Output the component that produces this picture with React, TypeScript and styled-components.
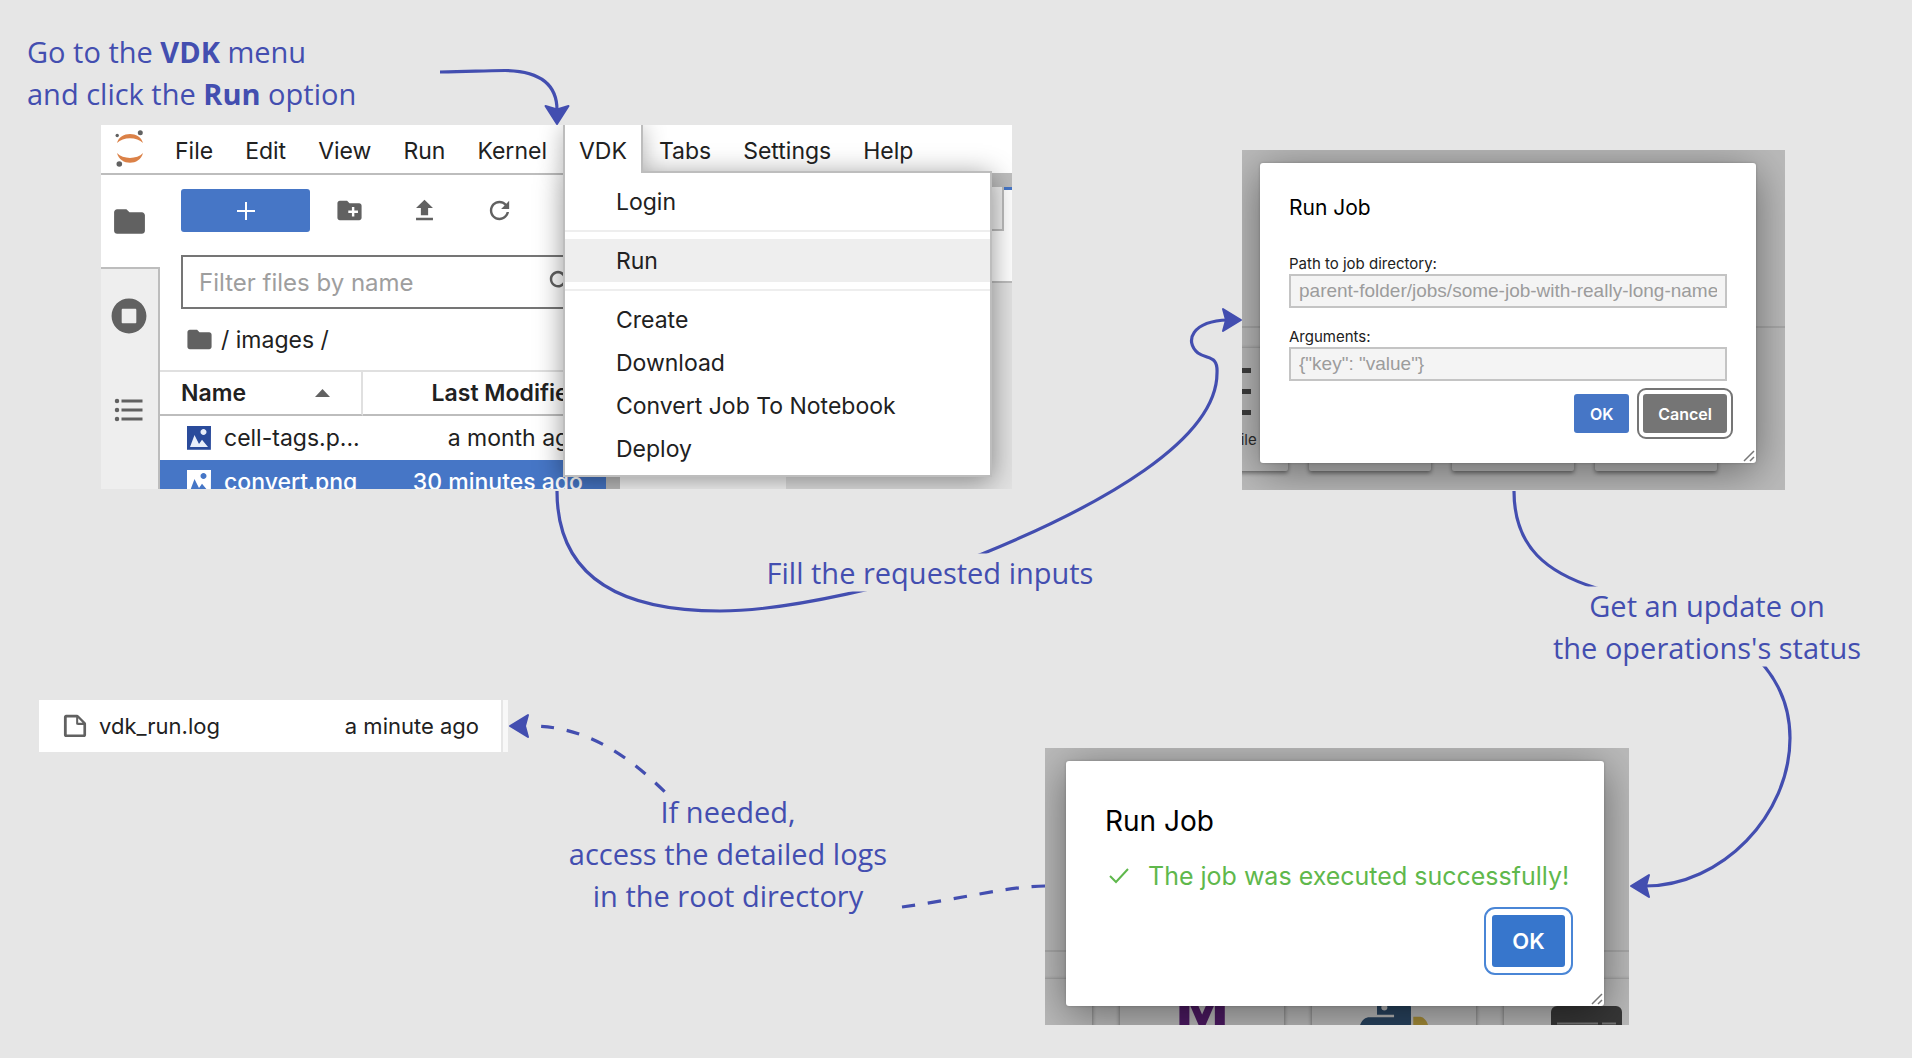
import React from 'react';
import styled, { createGlobalStyle, css } from 'styled-components';

const ink = '#434eb0';
const blue = '#4676c6';
const ui = "Inter, 'Liberation Sans', sans-serif";

const GlobalStyle = createGlobalStyle`
  *, *::before, *::after { box-sizing: border-box; }
  body { margin: 0; background: #e6e6e6; font-family: ${ui}; color: #212121; }
  button, input { font: inherit; }
  button { cursor: pointer; }
`;

const Board = styled.main`
  position: relative;
  width: 100%;
  min-height: 1058px;
  overflow: hidden;
`;

/* A node of the diagram, pinned on the board */
const Node = styled.section<{ $x: number; $y: number; $w: number }>`
  position: absolute;
  left: ${(p) => p.$x}px;
  top: ${(p) => p.$y}px;
  width: ${(p) => p.$w}px;
`;

const Note = styled.p<{ $x: number; $y: number; $w: number; $center?: boolean }>`
  position: absolute;
  left: ${(p) => p.$x}px;
  top: ${(p) => p.$y}px;
  width: ${(p) => p.$w}px;
  margin: 0;
  font: 400 29px/42px 'Open Sans', 'Noto Sans', sans-serif;
  color: ${ink};
  text-align: ${(p) => (p.$center ? 'center' : 'left')};
  b { font-weight: 700; }
`;

const Connectors = styled.svg`
  position: absolute;
  left: 0;
  top: 0;
  pointer-events: none;
`;

/* ---------- JupyterLab window ---------- */

const Lab = styled(Node)`
  display: flex;
  flex-direction: column;
  height: 364px;
  overflow: hidden;
  background: #fff;
`;

const MenuBar = styled.nav`
  position: relative;
  z-index: 2;
  display: flex;
  flex: none;
  height: 50px;
  border-bottom: 2px solid #bdbdbd;
`;

const LogoBox = styled.div`
  width: 58px;
  padding: 4px 0 0 13px;
`;

const menuText = css`
  font-size: 23px;
  line-height: 28px;
  color: #212121;
`;

const MenuButton = styled.button<{ $open?: boolean }>`
  ${menuText}
  position: relative;
  height: 48px;
  padding: 4px 16px 0;
  border: 0;
  background: none;
  ${(p) => p.$open && css`
    z-index: 2;
    padding: 4px 14px 0;
    border: solid #bdbdbd;
    border-width: 0 2px;
    background: #fff;
  `}
`;

const MenuSlot = styled.div`
  position: relative;
  z-index: 1;
  box-shadow: 0 2px 24px rgba(0, 0, 0, 0.3);
`;

const OpenMenu = styled.div`
  position: absolute;
  z-index: 1;
  top: 46px;
  left: 0;
  display: flex;
  flex-direction: column;
  width: 429px;
  padding: 7px 0 5px;
  border: 2px solid #bdbdbd;
  background: #fff;
  box-shadow: 0 4px 26px rgba(0, 0, 0, 0.42);
`;

const MenuItem = styled.button<{ $active?: boolean }>`
  ${menuText}
  height: 43px;
  padding: 0 51px;
  border: 0;
  text-align: left;
  background: ${(p) => (p.$active ? '#eee' : 'transparent')};
`;

const Rule = styled.hr`
  width: 100%;
  height: 2px;
  margin: 7px 0;
  border: 0;
  background: #eee;
`;

const Body = styled.div`
  display: flex;
  flex: 1;
  min-height: 0;
`;

const SideBar = styled.div`
  display: flex;
  flex: none;
  flex-direction: column;
  width: 59px;
`;

const SideTab = styled.button<{ $active?: boolean }>`
  display: flex;
  flex: none;
  align-items: center;
  justify-content: center;
  height: ${(p) => (p.$active ? 92 : 94)}px;
  padding: 0 2px 0 0;
  border: 0;
  background: none;
  color: #616161;
`;

const SideRest = styled.div`
  flex: 1;
  display: flex;
  flex-direction: column;
  border: solid #bdbdbd;
  border-width: 2px 2px 0 0;
  background: #eee;
`;

const Files = styled.div`
  display: flex;
  flex: none;
  flex-direction: column;
  width: 446px;
  background: #fff;
`;

const Toolbar = styled.div`
  display: flex;
  flex: none;
  align-items: center;
  padding: 14px 21px 0;
`;

const NewButton = styled.button`
  display: flex;
  align-items: center;
  justify-content: center;
  width: 129px;
  height: 43px;
  margin-right: 2px;
  border: 0;
  border-radius: 3px;
  background: ${blue};
  color: #fff;
`;

const ToolButton = styled.button`
  display: flex;
  align-items: center;
  justify-content: center;
  width: 75px;
  height: 43px;
  padding: 0;
  border: 0;
  background: none;
  color: #616161;
`;

const Filter = styled.label`
  display: flex;
  flex: none;
  align-items: center;
  height: 54px;
  margin: 23px 21px 0;
  padding: 0 8px 0 16px;
  border: 2px solid #757575;
  color: #616161;
`;

const FilterInput = styled.input`
  flex: 1;
  min-width: 0;
  padding: 0;
  border: 0;
  outline: 0;
  font-size: 24px;
  background: none;
  &::placeholder { color: #9e9e9e; opacity: 1; }
`;

const Crumbs = styled.div`
  ${menuText}
  display: flex;
  flex: none;
  align-items: center;
  gap: 7px;
  height: 61px;
  padding: 0 25px;
  svg { color: #616161; }
`;

const FileTable = styled.table`
  width: 100%;
  table-layout: fixed;
  border-collapse: separate;
  border-spacing: 0;
  ${menuText}
`;

const Th = styled.th<{ $end?: boolean }>`
  height: 46px;
  padding: ${(p) => (p.$end ? '0 23px 0 0' : '0 31px 0 21px')};
  border-top: 2px solid #e0e0e0;
  border-bottom: 2px solid #bdbdbd;
  border-right: ${(p) => (p.$end ? '0' : '2px solid #e0e0e0')};
  font-weight: 600;
  text-align: ${(p) => (p.$end ? 'right' : 'left')};
  white-space: nowrap;
`;

const NameHead = styled.span`
  display: flex;
  align-items: center;
  justify-content: space-between;
  svg { color: #616161; }
`;

const Row = styled.tr<{ $selected?: boolean }>`
  ${(p) => p.$selected && css`
    background: ${blue};
    color: #fff;
    font-weight: 500;
  `}
`;

const Td = styled.td<{ $end?: boolean }>`
  height: 44px;
  padding: ${(p) => (p.$end ? '0 23px 0 0' : '0 0 0 24px')};
  text-align: ${(p) => (p.$end ? 'right' : 'left')};
  white-space: nowrap;
`;

const FileName = styled.span`
  display: flex;
  align-items: center;
  gap: 10px;
`;

const Divider = styled.div`
  width: 14px;
  background: #bdbdbd;
`;

const Work = styled.div`
  display: flex;
  flex: 1;
  flex-direction: column;
  background: #e2e2e2;
`;

const WorkStrip = styled.div`
  height: 12px;
  background: #bdbdbd;
`;

const WorkTabs = styled.div`
  display: flex;
  height: 44px;
  background: #fff;
`;

const WorkTab = styled.div`
  width: 384px;
  border: solid #bdbdbd;
  border-width: 0 2px 2px 0;
  background: #eee;
`;

const WorkTabActive = styled.div`
  flex: 1;
  border-top: 3px solid ${blue};
`;

const WorkToolbar = styled.div`
  height: 52px;
  border-bottom: 2px solid #bdbdbd;
  background: #fff;
`;

const WorkCell = styled.div`
  flex: 1;
  width: 166px;
  background: #f8f8f8;
`;

/* ---------- Log file row ---------- */

const LogRow = styled(Node)`
  display: flex;
  height: 52px;
  background: #f8f8f8;
`;

const LogCell = styled.div`
  display: flex;
  flex: 1;
  align-items: center;
  gap: 10px;
  margin-right: 5px;
  padding: 0 22px;
  border-right: 2px solid #e6e6e6;
  background: #fff;
  font-size: 22px;
  line-height: 28px;
  svg { color: #616161; }
`;

const Age = styled.span`
  margin-left: auto;
`;

/* ---------- Dialogs over the launcher ---------- */

const Scene = styled(Node)<{ $h: number }>`
  display: grid;
  grid-template-columns: minmax(0, 1fr);
  height: ${(p) => p.$h}px;
  overflow: hidden;
  background: #bababa;
  > * { grid-area: 1 / 1; }
`;

const Launcher = styled.div<{ $top: number; $gap: number }>`
  display: flex;
  gap: ${(p) => p.$gap}px;
  min-width: 0;
  margin-top: ${(p) => p.$top}px;
  padding-top: ${(p) => p.$gap - 2}px;
  border-top: 2px solid #a8a8a8;
`;

const Card = styled.div<{ $w: number; $h: number; $shift?: number }>`
  display: flex;
  flex: none;
  flex-direction: column;
  align-items: center;
  width: ${(p) => p.$w}px;
  height: ${(p) => p.$h}px;
  margin-left: ${(p) => p.$shift ?? 0}px;
  padding-top: 20px;
  border-top: 1px solid #a4a4a4;
  border-radius: 2px;
  background: #b9b9b9;
  box-shadow: 0 2px 4px rgba(0, 0, 0, 0.45);
`;

const CardLabel = styled.span`
  margin-top: 14px;
  font-size: 15px;
  line-height: 20px;
  color: #2c2c2c;
`;

const Markdown = styled.span`
  font: 700 56px/30px 'DejaVu Sans', sans-serif;
  color: #4d1a63;
`;

const Dialog = styled.form<{ $big?: boolean }>`
  position: relative;
  display: flex;
  flex-direction: column;
  align-self: start;
  min-width: 0;
  margin: ${(p) => (p.$big ? '13px 25px 0 21px' : '13px 29px 0 18px')};
  padding: ${(p) => (p.$big ? '39px' : '30px 29px')};
  border-radius: 3px;
  background: #fff;
  box-shadow: 0 8px 44px rgba(0, 0, 0, 0.45), 0 0 3px rgba(0, 0, 0, 0.2);
`;

const Title = styled.h2<{ $big?: boolean }>`
  margin: 0 0 ${(p) => (p.$big ? 17 : 31)}px;
  font-weight: 400;
  font-size: ${(p) => (p.$big ? 28 : 21)}px;
  line-height: ${(p) => (p.$big ? 42 : 30)}px;
  color: #000;
`;

const Field = styled.label`
  display: flex;
  flex-direction: column;
  font-size: 15px;
  line-height: 20px;
  & + & { margin-top: 19px; }
`;

const TextInput = styled.input`
  width: 100%;
  height: 34px;
  padding: 0 8px;
  border: 2px solid #c4c4c4;
  background: #f4f4f4;
  font-family: 'Liberation Sans', Arial, sans-serif;
  font-size: 19px;
  &::placeholder { color: #9c9c9c; opacity: 1; }
`;

const Actions = styled.div<{ $big?: boolean }>`
  display: flex;
  justify-content: flex-end;
  gap: 14px;
  margin-top: ${(p) => (p.$big ? 22 : 13)}px;
`;

const DialogButton = styled.button<{ $tone?: 'grey' | 'blue'; $big?: boolean; $ring?: boolean }>`
  min-width: ${(p) => (p.$big ? 73 : 55)}px;
  height: ${(p) => (p.$big ? 52 : 39)}px;
  padding: 0 15px;
  border: 0;
  border-radius: 3px;
  background: ${(p) => (p.$tone === 'grey' ? '#757575' : p.$big ? '#3776cc' : blue)};
  color: #fff;
  font-size: ${(p) => (p.$big ? 22 : 16)}px;
  font-weight: 600;
  ${(p) => p.$ring && css`
    outline: 2px solid ${p.$tone === 'grey' ? '#757575' : '#4a86d6'};
    outline-offset: ${p.$big ? 6 : 4}px;
  `}
`;

const Success = styled.p`
  display: flex;
  align-items: center;
  gap: 19px;
  margin: 0;
  padding-left: 4px;
  font-size: 25px;
  line-height: 34px;
  white-space: nowrap;
  color: #5fb84c;
  svg { flex: none; }
`;

const Grip = styled.svg`
  position: absolute;
  right: 1px;
  bottom: 1px;
`;

/* ---------- Icons ---------- */

const Glyph = ({ d, size, box = 24 }: { d: string; size: number; box?: number }) => (
  <svg width={size} height={size} viewBox={`0 0 ${box} ${box}`} fill="currentColor" aria-hidden="true">
    <path d={d} fillRule="evenodd" />
  </svg>
);

const paths = {
  folder: 'M10 4H4c-1.1 0-1.99.9-1.99 2L2 18c0 1.1.9 2 2 2h16c1.1 0 2-.9 2-2V8c0-1.1-.9-2-2-2h-8l-2-2z',
  newFolder:
    'M20 6h-8l-2-2H4c-1.11 0-1.99.89-1.99 2L2 18c0 1.11.89 2 2 2h16c1.11 0 2-.89 2-2V8c0-1.11-.89-2-2-2zm-1 8h-3v3h-2v-3h-3v-2h3V9h2v3h3v2z',
  upload: 'M9 16h6v-6h4l-7-7-7 7h4zm-4 2h14v2H5z',
  refresh:
    'M9 13.5c-2.49 0-4.5-2.01-4.5-4.5S6.51 4.5 9 4.5c1.24 0 2.36.52 3.17 1.33L10 8h5V3l-1.76 1.76C12.15 3.68 10.66 3 9 3 5.69 3 3.01 5.69 3.01 9S5.69 15 9 15c2.97 0 5.43-2.16 5.9-5h-1.52c-.46 2-2.24 3.5-4.38 3.5z',
  running:
    'M256 8C119 8 8 119 8 256s111 248 248 248 248-111 248-248S393 8 256 8zm104 336c0 8.8-7.2 16-16 16H168c-8.8 0-16-7.2-16-16V168c0-8.8 7.2-16 16-16h176c8.8 0 16 7.2 16 16v176z',
  toc: 'M7,5H21V7H7V5M7,13V11H21V13H7M4,4.5A1.5,1.5 0 0,1 5.5,6A1.5,1.5 0 0,1 4,7.5A1.5,1.5 0 0,1 2.5,6A1.5,1.5 0 0,1 4,4.5M4,10.5A1.5,1.5 0 0,1 5.5,12A1.5,1.5 0 0,1 4,13.5A1.5,1.5 0 0,1 2.5,12A1.5,1.5 0 0,1 4,10.5M7,19V17H21V19H7M4,16.5A1.5,1.5 0 0,1 5.5,18A1.5,1.5 0 0,1 4,19.5A1.5,1.5 0 0,1 2.5,18A1.5,1.5 0 0,1 4,16.5Z',
  search:
    'M12.1 10.9h-.7l-.2-.2c.8-.9 1.3-2.2 1.3-3.5 0-3-2.4-5.4-5.4-5.4S1.8 4.2 1.8 7.1s2.4 5.4 5.4 5.4c1.3 0 2.5-.5 3.5-1.3l.2.2v.7l4.1 4.1 1.2-1.2-4.1-4.1zm-5 0c-2.1 0-3.7-1.7-3.7-3.7s1.7-3.7 3.7-3.7 3.7 1.7 3.7 3.7-1.6 3.7-3.7 3.7z',
  file: 'M19.3 8.2l-5.5-5.5c-.3-.3-.7-.5-1.2-.5H3.9c-.8.1-1.6.9-1.6 1.8v14.1c0 .9.7 1.6 1.6 1.6h14.2c.9 0 1.6-.7 1.6-1.6V9.4c.1-.5-.1-.9-.4-1.2zm-5.8-3.3l3.4 3.6h-3.4V4.9zm3.9 12.7H4.7c-.1 0-.2 0-.2-.2V4.7c0-.2.1-.3.2-.3h7.2v4.4s0 .8.3 1.1c.3.3 1.1.3 1.1.3h4.3v7.2s-.1.2-.2.2z',
  caret: 'M0 8L7.5 0L15 8Z',
};

const JupyterLogo = () => (
  <svg width="32" height="40" viewBox="0 0 32 40" aria-label="Jupyter">
    <path d="M3 14C6 2 26 2 29 14C23 7.5 9 7.5 3 14Z" fill="#db8147" />
    <path d="M3 24C6 37 26 37 29 24C23 30.5 9 30.5 3 24Z" fill="#db8147" />
    <circle cx="26.3" cy="3.7" r="2.5" fill="#616161" />
    <circle cx="3.2" cy="6.5" r="1.7" fill="#616161" />
    <circle cx="5.3" cy="35" r="2.8" fill="#616161" />
  </svg>
);

const ImageIcon = ({ back, front }: { back: string; front: string }) => (
  <svg width="30" height="30" viewBox="0 0 22 22" aria-hidden="true">
    <path d="M2.2 2.2h17.5v17.5H2.2z" fill={front} />
    <path
      fill={back}
      d="M2.2 2.2v17.5h17.5l.1-17.5H2.2zm12.1 2.2c1.2 0 2.2 1 2.2 2.2s-1 2.2-2.2 2.2-2.2-1-2.2-2.2 1-2.2 2.2-2.2zM4.4 17.6l3.3-8.8 3.3 6.6 2.2-3.2 4.4 5.4H4.4z"
    />
  </svg>
);

const PythonIcon = () => (
  <svg width="70" height="70" viewBox="0 0 24 24" aria-hidden="true">
    <path
      fill="#28435f"
      d="M14.25.18l.9.2.73.26.59.3.45.32.34.34.25.34.16.33.1.3.04.26.02.2-.01.13V8.5l-.05.63-.13.55-.21.46-.26.38-.3.31-.33.25-.35.19-.35.14-.33.1-.3.07-.26.04-.21.02H8.77l-.69.05-.59.14-.5.22-.41.27-.33.32-.27.35-.2.36-.15.37-.1.35-.07.32-.04.27-.02.21v3.06H3.17l-.21-.03-.28-.07-.32-.12-.35-.18-.36-.26-.36-.36-.35-.46-.32-.59-.28-.73-.21-.88-.14-1.05-.05-1.23.06-1.22.16-1.04.24-.87.32-.71.36-.57.4-.44.42-.33.42-.24.4-.16.36-.1.32-.05.24-.01h.16l.06.01h8.16v-.83H6.18l-.01-2.75-.02-.37.05-.34.11-.31.17-.28.25-.26.31-.23.38-.2.44-.18.51-.15.58-.12.64-.1.71-.06.77-.04.84-.02 1.27.05zm-6.3 1.98l-.23.33-.08.41.08.41.23.34.33.22.41.09.41-.09.33-.22.23-.34.08-.41-.08-.41-.23-.33-.33-.22-.41-.09-.41.09z"
    />
    <path
      fill="#a58c38"
      d="M21.04 6.11l.28.06.32.12.35.18.36.27.36.35.35.47.32.59.28.73.21.88.14 1.04.05 1.23-.06 1.23-.16 1.04-.24.86-.32.71-.36.57-.4.45-.42.33-.42.24-.4.16-.36.09-.32.05-.24.02-.16-.01h-8.22v.82h5.84l.01 2.76.02.36-.05.34-.11.31-.17.29-.25.25-.31.24-.38.2-.44.17-.51.15-.58.13-.64.09-.71.07-.77.04-.84.01-1.27-.04-1.07-.14-.9-.2-.73-.25-.59-.3-.45-.33-.34-.34-.25-.34-.16-.33-.1-.3-.04-.25-.02-.2.01-.13v-5.34l.05-.64.13-.54.21-.46.26-.38.3-.32.33-.24.35-.2.35-.14.33-.1.3-.06.26-.04.21-.02.13-.01h5.84l.69-.05.59-.14.5-.21.41-.28.33-.32.27-.35.2-.36.15-.36.1-.35.07-.32.04-.28.02-.21V6.07h2.09l.14.01z"
    />
  </svg>
);

const TerminalIcon = () => (
  <svg width="71" height="66" viewBox="0 0 71 66" aria-hidden="true">
    <rect y="7" width="71" height="59" rx="6" fill="#373737" />
    <path d="M6 24.5H47M51 24.5H65" stroke="#777" strokeWidth="2" />
  </svg>
);

const LinesIcon = () => (
  <svg width="48" height="48" viewBox="0 0 48 48" aria-hidden="true">
    <path d="M0 2.5H48M0 23.5H48M0 44.5H48" stroke="#3d3d3d" strokeWidth="5" />
  </svg>
);

const ResizeGrip = () => (
  <Grip width="12" height="12" viewBox="0 0 12 12" stroke="#777" aria-hidden="true">
    <path d="M1 11L11 1M7 11L11 7" strokeWidth="1.5" />
  </Grip>
);

/* ---------- Parts ---------- */

const LabWindow = () => (
  <Lab $x={101} $y={125} $w={911}>
    <MenuBar>
      <LogoBox><JupyterLogo /></LogoBox>
      {['File', 'Edit', 'View', 'Run', 'Kernel'].map((m) => <MenuButton key={m}>{m}</MenuButton>)}
      <MenuSlot>
        <MenuButton $open>VDK</MenuButton>
        <OpenMenu role="menu">
          <MenuItem>Login</MenuItem>
          <Rule />
          <MenuItem $active>Run</MenuItem>
          <Rule />
          <MenuItem>Create</MenuItem>
          <MenuItem>Download</MenuItem>
          <MenuItem>Convert Job To Notebook</MenuItem>
          <MenuItem>Deploy</MenuItem>
        </OpenMenu>
      </MenuSlot>
      {['Tabs', 'Settings', 'Help'].map((m) => <MenuButton key={m}>{m}</MenuButton>)}
    </MenuBar>
    <Body>
      <SideBar>
        <SideTab $active aria-label="File browser"><Glyph d={paths.folder} size={37} /></SideTab>
        <SideRest>
          <SideTab aria-label="Running"><Glyph d={paths.running} size={36} box={512} /></SideTab>
          <SideTab aria-label="Table of contents"><Glyph d={paths.toc} size={36} /></SideTab>
        </SideRest>
      </SideBar>
      <Files>
        <Toolbar>
          <NewButton aria-label="New launcher">
            <svg width="18" height="18" viewBox="0 0 18 18" stroke="#fff" strokeWidth="2"><path d="M9 0V18M0 9H18" /></svg>
          </NewButton>
          <ToolButton aria-label="New folder"><Glyph d={paths.newFolder} size={29} /></ToolButton>
          <ToolButton aria-label="Upload"><Glyph d={paths.upload} size={29} /></ToolButton>
          <ToolButton aria-label="Refresh"><Glyph d={paths.refresh} size={29} box={18} /></ToolButton>
        </Toolbar>
        <Filter>
          <FilterInput aria-label="Filter files by name" placeholder="Filter files by name" />
          <Glyph d={paths.search} size={28} box={18} />
        </Filter>
        <Crumbs><Glyph d={paths.folder} size={29} />/ images /</Crumbs>
        <FileTable>
          <colgroup><col width="203" /><col /></colgroup>
          <thead>
            <tr>
              <Th>
                <NameHead>
                  Name
                  <svg width="15" height="8" viewBox="0 0 15 8" fill="currentColor"><path d={paths.caret} /></svg>
                </NameHead>
              </Th>
              <Th $end>Last Modified</Th>
            </tr>
          </thead>
          <tbody>
            <Row>
              <Td><FileName><ImageIcon back="#2a4b9b" front="#e8eefa" />cell-tags.p...</FileName></Td>
              <Td $end>a month ago</Td>
            </Row>
            <Row $selected>
              <Td><FileName><ImageIcon back="#fff" front={blue} />convert.png</FileName></Td>
              <Td $end>30 minutes ago</Td>
            </Row>
          </tbody>
        </FileTable>
      </Files>
      <Divider />
      <Work>
        <WorkStrip />
        <WorkTabs><WorkTab /><WorkTabActive /></WorkTabs>
        <WorkToolbar />
        <WorkCell />
      </Work>
    </Body>
  </Lab>
);

const InputDialog = () => (
  <Scene $x={1242} $y={150} $w={543} $h={340}>
    <Launcher $top={176} $gap={21}>
      <Card $w={122} $h={124} $shift={-76}>
        <LinesIcon />
        <CardLabel>Text File</CardLabel>
      </Card>
      <Card $w={122} $h={124} />
      <Card $w={122} $h={124} />
      <Card $w={122} $h={124} />
    </Launcher>
    <Dialog onSubmit={(e) => e.preventDefault()}>
      <Title>Run Job</Title>
      <Field>
        Path to job directory:
        <TextInput placeholder="parent-folder/jobs/some-job-with-really-long-name" />
      </Field>
      <Field>
        Arguments:
        <TextInput placeholder={'{"key": "value"}'} />
      </Field>
      <Actions>
        <DialogButton>OK</DialogButton>
        <DialogButton type="button" $tone="grey" $ring>Cancel</DialogButton>
      </Actions>
      <ResizeGrip />
    </Dialog>
  </Scene>
);

const ResultDialog = () => (
  <Scene $x={1045} $y={748} $w={584} $h={277}>
    <Launcher $top={202} $gap={28}>
      <Card $w={164} $h={180} $shift={-117} />
      <Card $w={164} $h={180}><Markdown>M</Markdown></Card>
      <Card $w={164} $h={180}><PythonIcon /></Card>
      <Card $w={164} $h={180}><TerminalIcon /></Card>
    </Launcher>
    <Dialog $big onSubmit={(e) => e.preventDefault()}>
      <Title $big>Run Job</Title>
      <Success>
        <svg width="20" height="16" viewBox="0 0 20 16" fill="none" stroke="#5fb84c" strokeWidth="2"><path d="M1 8L7 14L19 1" /></svg>
        The job was executed successfully!
      </Success>
      <Actions $big><DialogButton $big $ring>OK</DialogButton></Actions>
      <ResizeGrip />
    </Dialog>
  </Scene>
);

const Arrows = () => (
  <Connectors width="1912" height="1058" viewBox="0 0 1912 1058" aria-hidden="true">
    <clipPath id="gaps">
      <path clipRule="evenodd" d="M0 0H1912V1058H0ZM760 553.5H1100V591.5H760ZM1540 586.5H1870V666.5H1540ZM560 793H896V920H560Z" />
    </clipPath>
    <g clipPath="url(#gaps)" fill="none" stroke={ink} strokeWidth="3.2">
      <path d="M440 72C470 72 480 70.5 505 70.5C540 71 557 84 557 110" />
      <path d="M557 491C557 570 610 611 720 611C785 611 905 585 982 554C1102 505 1217 440 1217 373C1218 355 1208 360 1198 353C1184 341 1192 321 1228 320" />
      <path d="M1514 491C1514 548 1548 573 1596 588C1660 606 1735 630 1765 667C1782 688 1790 712 1790 738C1790 815 1722 886 1645 886" />
      <path d="M528 726C585 725 628 755 668 795" strokeDasharray="13 13" strokeDashoffset="13" />
      <path d="M1045 886C1010 886 960 899 902 907" strokeDasharray="13.5 12.8" />
    </g>
    <g fill={ink} stroke={ink} strokeWidth="2" strokeLinejoin="round">
      <path d="M557 124L545.5 106L557 109.5L568.5 106Z" />
      <path d="M1241 320L1223 309L1226 320L1223 331Z" />
      <path d="M1631 886L1649 875L1646 886L1649 897Z" />
      <path d="M510 726L528 715L525 726L528 737Z" />
    </g>
  </Connectors>
);

export default function App() {
  return (
    <Board>
      <GlobalStyle />
      <Note $x={27} $y={31} $w={400}>Go to the <b>VDK</b> menu<br />and click the <b>Run</b> option</Note>
      <LabWindow />
      <InputDialog />
      <Note $x={730} $y={552} $w={400} $center>Fill the requested inputs</Note>
      <Note $x={1507} $y={585} $w={400} $center>Get an update on<br />the operations's status</Note>
      <ResultDialog />
      <Note $x={528} $y={791} $w={400} $center>If needed,<br />access the detailed logs<br />in the root directory</Note>
      <LogRow $x={39} $y={700} $w={469}>
        <LogCell><Glyph d={paths.file} size={28} box={22} />vdk_run.log<Age>a minute ago</Age></LogCell>
      </LogRow>
      <Arrows />
    </Board>
  );
}
